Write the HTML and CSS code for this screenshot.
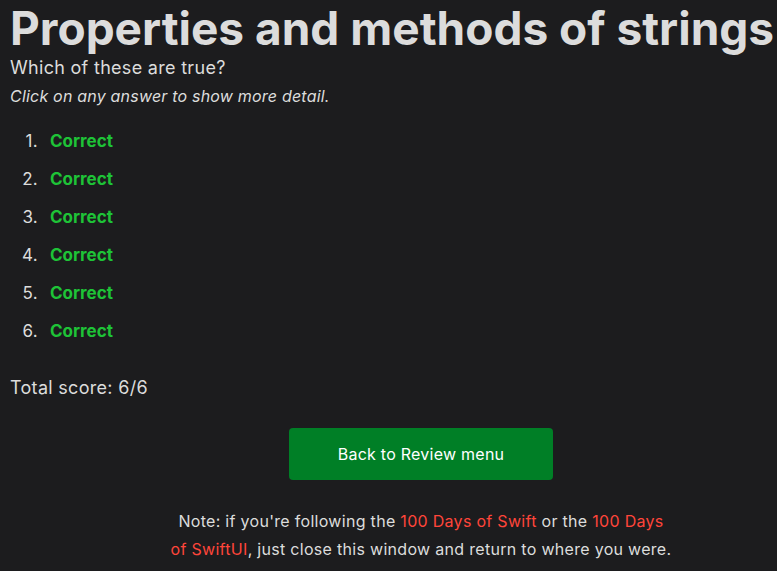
FILE: index.html
```html
<!DOCTYPE html>
<html>
<head>
<meta charset="utf-8">
<link rel="stylesheet" href="styles.css">
</head>
<body>
<div class="page">
  <h1 class="title">Properties and methods of strings</h1>
  <p class="question">Which of these are true?</p>
  <p class="hint">Click on any answer to show more detail.</p>
  <ol class="answers">
    <li><span class="correct">Correct</span></li>
    <li><span class="correct">Correct</span></li>
    <li><span class="correct">Correct</span></li>
    <li><span class="correct">Correct</span></li>
    <li><span class="correct">Correct</span></li>
    <li><span class="correct">Correct</span></li>
  </ol>
  <p class="score">Total score: 6/6</p>
  <div class="footer">
    <a class="button" href="#">Back to Review menu</a>
    <p class="note">Note: if you're following the <a class="link" href="#">100 Days of Swift</a> or the <a class="link" href="#">100 Days<br>of SwiftUI</a>, just close this window and return to where you were.</p>
  </div>
</div>
</body>
</html>
```
FILE: styles.css
```css
html, body {
  margin: 0;
  padding: 0;
  background: #1c1c1e;
}
body {
  font-family: Inter, "Noto Sans", sans-serif;
  color: #dcdcdc;
}
.page {
  padding: 0 10px;
}
.title {
  margin: 0;
  padding-top: 2px;
  font-size: 46px;
  font-weight: 700;
  line-height: 52px;
  color: #dcdcdc;
  white-space: nowrap;
  letter-spacing: 0;
}
.question {
  margin: 1px 0 0;
  font-size: 18px;
  line-height: 26px;
  letter-spacing: 0.3px;
}
.hint {
  margin: 4px 0 0;
  font-size: 16px;
  line-height: 22px;
  font-style: italic;
  letter-spacing: 0.2px;
}
.answers {
  margin: 23px 0 0;
  padding: 0;
  list-style: none;
  counter-reset: item;
  font-size: 17px;
  line-height: 22px;
}
.answers li {
  counter-increment: item;
  margin-bottom: 16px;
}
.answers li::before {
  content: counter(item) ".";
  display: inline-block;
  width: 28px;
  margin-right: 12px;
  text-align: right;
  color: #dcdcdc;
  letter-spacing: 0.3px;
}
.correct {
  color: #1ec337;
  font-weight: 700;
}
.score {
  margin: 34px 0 0;
  font-size: 18px;
  line-height: 24px;
  letter-spacing: 0.3px;
}
.footer {
  padding-left: 65px;
  text-align: center;
  margin-top: 28px;
}
.button {
  display: inline-block;
  width: 264px;
  height: 52px;
  line-height: 52px;
  background: #007f26;
  color: #ffffff;
  border-radius: 4px;
  font-size: 16px;
  letter-spacing: 0.25px;
  text-decoration: none;
}
.note {
  margin: 27px auto 0;
  font-size: 16px;
  line-height: 28px;
  letter-spacing: 0.3px;
}
.link {
  color: #ff453a;
  text-decoration: none;
}
```
